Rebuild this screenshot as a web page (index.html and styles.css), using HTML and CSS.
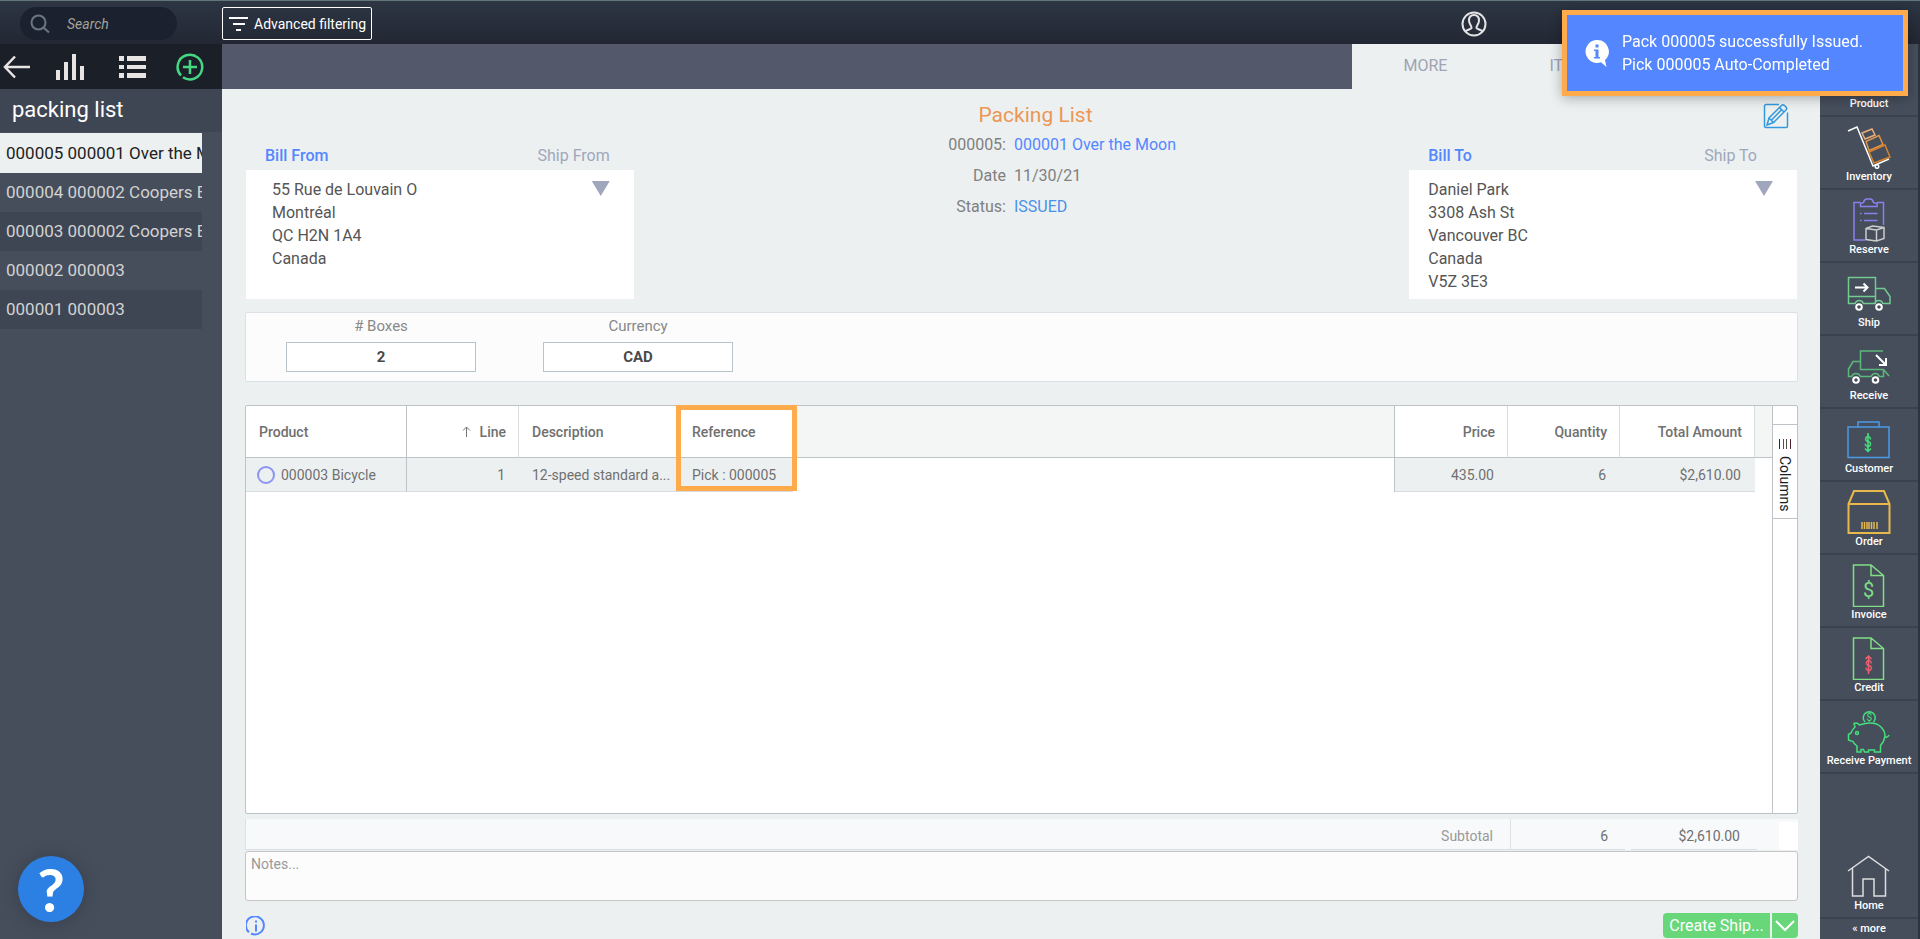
FILE: index.html
```html
<!DOCTYPE html>
<html lang="en">
<head>
    <meta charset="UTF-8">
    <meta name="viewport" content="width=device-width, initial-scale=1.0">
    <title>Packing List</title>
    <link rel="stylesheet" href="styles.css">
</head>
<body>
    <header class="topbar">
        <label class="search">
            <svg width="20" height="20" viewBox="0 0 20 20" fill="none" stroke="#6b7684" stroke-width="2"><circle cx="8.500" cy="8.500" r="7"/><path d="M13.500 13.500L19 18.500"/></svg>
            <input type="text" placeholder="Search" aria-label="Search">
        </label>
        <button class="filter-button">
            <svg width="20" height="16" viewBox="0 0 20 16" fill="none" stroke="#fff" stroke-width="2"><path d="M0 2h19M4 8h12M7 14h5"/></svg>
            Advanced filtering
        </button>
        <button class="user-button" aria-label="Account">
            <svg width="26" height="26" viewBox="0 0 26 26" fill="none" stroke="#e4e4e6" stroke-width="2"><circle cx="13" cy="13" r="11.500"/><path d="M4.500 20.500c2-2 5-2 6-3.500.6-1.500-2.500-4-2.500-7.500C8 6 10 4 13 4s5 2 5 5.500c0 3.500-3.100 6-2.500 7.500 1 1.500 4 1.500 6 3.500"/></svg>
        </button>
    </header>

    <div class="layout">
        <aside class="sidebar">
            <div class="sidebar-tools">
                <button class="back" aria-label="Back">
                    <svg width="28" height="28" viewBox="0 0 28 28" fill="none" stroke="#e8e4e4" stroke-width="2.500"><path d="M27 14H2M12 3.500L2 14l10 10.500"/></svg>
                </button>
                <button class="charts" aria-label="Charts">
                    <svg width="28" height="28" viewBox="0 0 28 28" fill="#e8e4e4"><path d="M0 17h4v10H0zM8 9h4v18H8zM16 1h4v26h-4zM24 13h4v14h-4z"/></svg>
                </button>
                <button class="list" aria-label="List">
                    <svg width="28" height="28" viewBox="0 0 28 28" fill="#e8e4e4"><path d="M0 3h5v5H0zM8 3h19v5H8zM0 12h5v4H0zM8 12h19v4H8zM0 20h5v5H0zM8 20h19v5H8z"/></svg>
                </button>
                <button aria-label="Add">
                    <svg width="28" height="28" viewBox="0 0 28 28" fill="none" stroke="#45d882" stroke-width="2.500"><path d="M14 7v14M7 14h14M5 22.500A12.300 12.300 0 1 1 7 24.200"/></svg>
                </button>
            </div>
            <h1 class="sidebar-title">packing list</h1>
            <ul class="records">
                <li><a class="active" href="#">000005 000001 Over the Moon</a></li>
                <li><a href="#">000004 000002 Coopers Bikes</a></li>
                <li><a href="#">000003 000002 Coopers Bikes</a></li>
                <li><a href="#">000002 000003</a></li>
                <li><a href="#">000001 000003</a></li>
            </ul>
        </aside>

        <main class="main">
            <nav class="tabs">
                <a href="#">MORE</a>
                <a href="#">ITEMS</a>
            </nav>

            <div class="document">
                <div class="document-head">
                    <section class="address">
                        <div class="address-tabs">
                            <a class="active" href="#">Bill From</a>
                            <a href="#">Ship From</a>
                        </div>
                        <div class="address-card">
                            <p>55 Rue de Louvain O<br>Montréal<br>QC H2N 1A4<br>Canada</p>
                            <button class="triangle" aria-label="Choose address"></button>
                        </div>
                    </section>

                    <section class="summary">
                        <h2>Packing List</h2>
                        <dl>
                            <dt>000005:</dt>
                            <dd><a href="#">000001 Over the Moon</a></dd>
                            <dt>Date</dt>
                            <dd>11/30/21</dd>
                            <dt>Status:</dt>
                            <dd class="status">ISSUED</dd>
                        </dl>
                    </section>

                    <section class="address address-to">
                        <button class="edit-button" aria-label="Edit">
                            <svg width="26" height="26" viewBox="0 0 26 26" fill="none" stroke="#3498db" stroke-width="1.500"><path d="M16 1.500H3A1.500 1.500 0 0 0 1.500 3v20A1.500 1.500 0 0 0 3 24.500h20a1.500 1.500 0 0 0 1.500-1.500V9.500"/><path d="M4 22l2-7L18.500 2.500q1.500-1.500 3 0l1.500 1.500q1.500 1.500 0 3L10.500 19.500zM6 15l4.500 4.500M16.500 4.500L21 9M18.500 6.800L8.500 17"/></svg>
                        </button>
                        <div class="address-tabs">
                            <a class="active" href="#">Bill To</a>
                            <a href="#">Ship To</a>
                        </div>
                        <div class="address-card">
                            <p>Daniel Park<br>3308 Ash St<br>Vancouver BC<br>Canada<br>V5Z 3E3</p>
                            <button class="triangle" aria-label="Choose address"></button>
                        </div>
                    </section>
                </div>

                <div class="fields">
                    <div class="field">
                        <label for="boxes"># Boxes</label>
                        <input type="text" id="boxes" value="2">
                    </div>
                    <div class="field">
                        <label for="currency">Currency</label>
                        <input type="text" id="currency" value="CAD">
                    </div>
                </div>

                <div class="grid">
                    <div class="grid-body">
                        <table>
                            <colgroup>
                                <col class="col-product">
                                <col class="col-line">
                                <col class="col-description">
                                <col class="col-reference">
                                <col>
                                <col class="col-price">
                                <col class="col-quantity">
                                <col class="col-total">
                                <col class="col-end">
                            </colgroup>
                            <thead>
                                <tr>
                                    <th class="pinned">Product</th>
                                    <th class="number"><svg width="9" height="11" viewBox="0 0 9 11" fill="none" stroke="#757575"><path d="M4.500 11V1M1 4.500L4.500 1 8 4.500"/></svg>Line</th>
                                    <th>Description</th>
                                    <th class="marked">Reference</th>
                                    <th class="blank pinned"></th>
                                    <th class="number">Price</th>
                                    <th class="number">Quantity</th>
                                    <th class="number">Total Amount</th>
                                    <th class="blank"></th>
                                </tr>
                            </thead>
                            <tbody>
                                <tr>
                                    <td class="pinned product"><label><input type="radio" name="row">000003 Bicycle</label></td>
                                    <td class="number">1</td>
                                    <td>12-speed standard a...</td>
                                    <td>Pick : 000005</td>
                                    <td class="blank pinned"></td>
                                    <td class="number">435.00</td>
                                    <td class="number">6</td>
                                    <td class="number">$2,610.00</td>
                                    <td class="blank"></td>
                                </tr>
                            </tbody>
                        </table>
                    </div>
                    <div class="grid-side">
                        <button class="columns-button">
                            <svg width="12" height="12" viewBox="0 0 12 12" fill="none"><path stroke="#302050" d="M.5 1v10"/><path stroke="#554" d="M4.500 1v10M7.500 1v10"/><path stroke="#502030" d="M11.500 1v10"/></svg>
                            Columns
                        </button>
                    </div>
                </div>

                <div class="totals">
                    <span class="totals-label">Subtotal</span>
                    <span class="totals-quantity">6</span>
                    <span class="totals-amount">$2,610.00</span>
                    <span class="totals-end"></span>
                </div>

                <textarea class="notes" placeholder="Notes..." aria-label="Notes"></textarea>

                <div class="actions">
                    <button class="info-button" aria-label="Information">
                        <svg width="20" height="20" viewBox="0 0 20 20" fill="none" stroke="#5487ff" stroke-width="2"><path d="M3 16.200A9 9 0 1 1 5 17.500"/><path d="M10 4.500v2M10 8.500v7"/></svg>
                    </button>
                    <div class="split-button">
                        <button class="create-button">Create Ship...</button>
                        <button class="more-actions" aria-label="More actions">
                            <svg width="20" height="12" viewBox="0 0 20 12" fill="none" stroke="#fff" stroke-width="2"><path d="M1 1l9 9 9-9"/></svg>
                        </button>
                    </div>
                </div>
            </div>
        </main>

        <nav class="rail">
            <a href="#">Product</a>
            <a href="#">
                <svg viewBox="0 0 44 44"><path stroke="#fff" d="M1 6l9-4 16 39 16-7"/><circle stroke="#fff" cx="30" cy="41.500" r="1.800"/><path stroke="#e8ae7c" d="M15 8l10-4 3 6-10 4z"/><path stroke="#dd9548" d="M19 16.500l13-6 4 9-14 6z"/><path stroke="#d4822b" d="M22 27l16-7 5 12-16 6z"/></svg>
                Inventory
            </a>
            <a href="#">
                <svg viewBox="0 0 44 44"><path stroke="#8c80ec" d="M13.500 4.500H7V42h11M30 4.500h6.500V27M13.500 8.500h16.500v-3l-3.500-1q-1-3.500-3-3.500h-4q-2 0-3 3.500l-3 1zM13 15.500h1.500M17 15.500h13.500M13 22.500h1.500M17 22.500h13.500"/><path stroke="#ccc" d="M19 30.500l6.500-2.500 11.500 1.500v11L29.500 43 19 41.500zl10.500 1.500L37 29.500M29.500 32v11"/></svg>
                Reserve
            </a>
            <a href="#">
                <svg viewBox="0 0 44 44"><path stroke="#72ca8e" d="M8 32.500H1.500V6.500h27v26H16M1.500 25.500h27M28.500 17.500h9l5.500 8v7h-6.500M8 33q1-3.500 4.300-3.500T16.500 33M27.500 33q1-3.500 4.300-3.500T36 33"/><g stroke="#fff" stroke-width="2"><path d="M8 16.500h12.500M16.500 12.500l4 4-4 4"/><circle cx="12" cy="36" r="2.800"/><circle cx="32" cy="36" r="2.800"/></g></svg>
                Ship
            </a>
            <a href="#">
                <svg viewBox="0 0 44 44"><path stroke="#5cb87a" d="M36 7H13.500v18.500h23l5.500 6.500M13.500 17.500H6L1.500 25v7.500h3M13.500 32.500h10M36.500 25.500v7h-4M4.500 33q1-3.500 4.500-3.500t4.500 3.500M24 33q1-3.500 4.300-3.500T32.500 33"/><g stroke="#fff" stroke-width="2"><path d="M29 11l9.500 9.500M39 14v7h-7"/><circle cx="9" cy="36" r="2.800"/><circle cx="28.500" cy="36" r="2.800"/></g></svg>
                Receive
            </a>
            <a href="#">
                <svg viewBox="0 0 44 44"><path stroke="#4b9be6" d="M1 10h41v30.500H1zM11 10V5h21v5"/><path stroke="#45e07c" d="M21 16v19M18 31.500l3 3 3-3"/><text x="21" y="30" fill="#45e07c">$</text></svg>
                Customer
            </a>
            <a href="#">
                <svg viewBox="0 0 44 44"><path stroke="#e8b84a" stroke-width="2" d="M1.500 14L7 1h30l5.500 13v29h-41zh41"/><path stroke="#e8b84a" d="M15 32v7M17.500 32v7M20 32v7M22 32v7M24.500 32v7M27 32v7M30 32v7"/></svg>
                Order
            </a>
            <a href="#">
                <svg viewBox="0 0 44 44"><path stroke="#80de84" d="M6.500 2h17.500L36.500 12.500V43.500h-30zM24 2v10.500h12.500"/><text class="large" x="21.500" y="34" fill="#80de84">$</text></svg>
                Invoice
            </a>
            <a href="#">
                <svg viewBox="0 0 44 44"><path stroke="#80de84" d="M6.500 2h17.500L36.500 12.500V43.500h-30zM24 2v10.500h12.500"/><path stroke="#ee6070" d="M21.500 20v18M18.500 23l3-3 3 3"/><text x="21.500" y="35" fill="#ee6070">$</text></svg>
                Credit
            </a>
            <a href="#">
                <svg viewBox="0 0 44 44"><path stroke="#45e07c" d="M16 15q12-3 18 3 4 4 4 9-1 6-4.500 9.500V43h-6v-2h-6v2h-4l-1-2.500H14V43h-4v-6q-3-2-4-4.500L1.500 31v-5.500L4 24q1.500-4 4-6l-1-3.500q3-1.500 5.500 1.500zM38.500 28q2 1 3.500-2M18 13a6 6 0 1 1 8.500 0"/><circle stroke="#45e07c" cx="10" cy="24" r="1.500"/><text class="small" x="22.300" y="12" fill="#45e07c">$</text></svg>
                Receive Payment
            </a>
            <a class="home" href="#">
                <svg viewBox="0 0 44 44"><path stroke="#ddd" d="M1 17L21.500 2.500 42 17M5.500 14v28H16V25h11v17h11.500V14"/></svg>
                Home
            </a>
            <a class="more" href="#">« more</a>
        </nav>
    </div>

    <div class="toast" role="status">
        <svg width="24" height="27" viewBox="0 0 24 27"><path fill="#fff" d="M12 0a11.500 11.500 0 1 0 4 22.300L21.500 27l-1.500-7A11.500 11.500 0 0 0 12 0z"/><path fill="#5487ff" d="M10.500 4.500h3v3h-3zM9 9.500h4.500V17H15v1.500H9V17h1.500v-6H9z"/></svg>
        <p>Pack 000005 successfully Issued.<br>Pick 000005 Auto-Completed</p>
    </div>

    <button class="help-button" aria-label="Help">?</button>
</body>
</html>
```

FILE: styles.css
```css
*, *::after {
    box-sizing: border-box;
}
body {
    margin: 0;
    height: 100vh;
    display: flex;
    flex-direction: column;
    overflow: hidden;
    font-family: Roboto, "Liberation Sans", sans-serif;
    font-size: 16px;
    color: #555;
    background-color: #ecf0f1;
}
a {
    text-decoration: none;
    color: inherit;
}
button {
    padding: 0;
    border: 0;
    background: none;
    font: inherit;
    color: inherit;
    cursor: pointer;
}
svg {
    display: block;
}
h1, h2, p, ul, dl, dd {
    margin: 0;
    padding: 0;
}

/* top bar */
.topbar {
    flex: none;
    display: flex;
    align-items: center;
    height: 44px;
    padding: 2px 433px 0 20px;
    border-top: 1px solid #627779;
    background: linear-gradient(#2e3644, #222733);
}
.search {
    display: flex;
    align-items: center;
    width: 157px;
    height: 33px;
    padding-left: 10px;
    border-radius: 17px;
    background-color: #1b212e;
}
.search input {
    width: 90px;
    margin-left: 17px;
    padding: 0;
    border: 0;
    outline: 0;
    background: none;
    font: italic 14px Roboto, sans-serif;
    color: #fff;
}
.search input::placeholder {
    color: #a3a39c;
}
.filter-button {
    display: flex;
    align-items: center;
    gap: 5px;
    height: 33px;
    margin-left: 45px;
    padding: 0 5px 0 6px;
    border: 1px solid #fff;
    border-radius: 2px;
    font-size: 14px;
    color: #fff;
}
.user-button {
    margin-left: auto;
}

.layout {
    flex: 1;
    display: flex;
    min-height: 0;
}

/* left sidebar */
.sidebar {
    flex: none;
    width: 222px;
    background-color: #464e5c;
}
.sidebar-tools {
    display: flex;
    align-items: center;
    height: 45px;
    padding: 1px 0 0 3px;
    background-color: #1a1f28;
}
.back {
    margin-right: 25px;
}
.charts {
    margin-right: 35px;
}
.list {
    margin-right: 29px;
}
.sidebar-title {
    height: 44px;
    padding-left: 12px;
    border-bottom: 1px solid #464e5c;
    background-color: #3f4653;
    font-size: 22px;
    font-weight: 400;
    line-height: 42px;
    color: #fff;
}
.records {
    width: 202px;
    list-style: none;
}
.records a {
    display: block;
    height: 39px;
    padding-left: 6px;
    overflow: hidden;
    white-space: nowrap;
    font-size: 17px;
    line-height: 39px;
    color: #d2d2d2;
}
.records li:nth-child(odd) {
    background-color: #3f4653;
}
.records .active {
    height: 40px;
    line-height: 40px;
    background-color: #ecf0f1;
    color: #222;
}

/* document */
.main {
    flex: 1;
    display: flex;
    flex-direction: column;
    min-width: 0;
}
.tabs {
    flex: none;
    display: flex;
    height: 45px;
    padding-right: 174px;
    justify-content: flex-end;
    background: linear-gradient(#ecf0f1, #ecf0f1) right / 468px 100% no-repeat #53586a;
}
.tabs a {
    width: 147px;
    text-align: center;
    line-height: 43px;
    color: #a0a3b1;
}
.document {
    flex: 1;
    display: flex;
    flex-direction: column;
    min-height: 0;
    padding: 0 22px 1px 23px;
}
.document-head {
    display: grid;
    grid-template-columns: 1fr 2fr 1fr;
    align-items: end;
    padding: 0 1px;
}
.address {
    display: flex;
    flex-direction: column;
}
.address-tabs {
    display: flex;
    justify-content: space-between;
    padding: 0 24px 4px 19px;
    line-height: 20px;
    color: #a0a7bc;
}
.address-tabs .active {
    font-weight: 500;
    color: #5487ff;
}
.address-card {
    display: flex;
    justify-content: space-between;
    align-items: flex-start;
    min-height: 129px;
    padding: 8px 24px 0 26px;
    background-color: #fff;
    line-height: 23px;
}
.address-to .address-tabs {
    padding-right: 40px;
}
.address-to .address-card {
    padding-left: 19px;
}
.triangle {
    width: 18px;
    height: 15px;
    margin-top: 3px;
    background-color: #a0a7bc;
    clip-path: polygon(0 0, 100% 0, 50% 100%);
}
.edit-button {
    align-self: flex-end;
    margin: 14px 8px 17px 0;
}
.summary {
    align-self: start;
    padding-top: 12px;
}
.summary h2 {
    padding-left: 28px;
    text-align: center;
    font-size: 21px;
    font-weight: 400;
    line-height: 28px;
    color: #ec9755;
}
.summary dl {
    display: grid;
    grid-template-columns: 48% 1fr;
    column-gap: 8px;
    line-height: 31px;
    color: #808080;
}
.summary dt {
    text-align: right;
}
.summary a {
    color: #5487ff;
}
.summary .status {
    color: #4a90e8;
}

.fields {
    display: flex;
    gap: 67px;
    height: 70px;
    margin-top: 13px;
    padding: 3px 40px 0;
    border: 1px solid #dbe1e5;
    border-radius: 2px;
    background-color: #fcfcfc;
}
.field {
    width: 190px;
    text-align: center;
}
.field label {
    display: block;
    font-size: 15px;
    line-height: 20px;
    color: #888;
}
.field input {
    width: 100%;
    height: 30px;
    margin-top: 6px;
    border: 1px solid #b9c4ca;
    background-color: #fff;
    text-align: center;
    font: 700 15px Roboto, sans-serif;
    color: #4a4a4a;
}

/* item grid */
.grid {
    flex: 1;
    display: flex;
    min-height: 0;
    margin-top: 23px;
    border: 1px solid #bdc3c7;
    border-radius: 2px;
    background-color: #fff;
}
.grid-body {
    flex: 1;
}
.grid table {
    width: 100%;
    table-layout: fixed;
    border-collapse: separate;
    border-spacing: 0;
    font-size: 14px;
    color: #707070;
}
.col-product {
    width: 161px;
}
.col-line {
    width: 112px;
}
.col-description {
    width: 160px;
}
.col-reference {
    width: 114px;
}
.col-price {
    width: 113px;
}
.col-quantity {
    width: 112px;
}
.col-total {
    width: 135px;
}
.col-end {
    width: 17px;
}
.grid th {
    position: relative;
    height: 52px;
    padding: 0 12px 0 13px;
    border-right: 1px solid #d9dcde;
    border-bottom: 1px solid #bdc3c7;
    text-align: left;
    font-weight: 500;
}
.grid td {
    height: 34px;
    padding: 0 14px 0 13px;
    border-bottom: 1px solid #d9dcde;
    background-color: #ecf0f1;
    white-space: nowrap;
}
.grid .pinned {
    border-right: 1px solid #bdc3c7;
}
.grid .number {
    text-align: right;
}
.grid th svg {
    display: inline-block;
    margin-right: 9px;
}
.grid th.blank {
    background-color: #f4f6f6;
}
.grid th.blank:last-child {
    border-right: 0;
}
.grid td.blank {
    border-bottom: 0;
    background-color: #fff;
}
/* outline round the reference column */
.marked::after {
    content: "";
    position: absolute;
    z-index: 1;
    top: -1px;
    left: -3px;
    width: 121px;
    height: 86px;
    border: 5px solid #ffab4b;
}
.grid td.product {
    padding-left: 11px;
}
.product label {
    display: flex;
    align-items: center;
    gap: 6px;
}
.product input {
    appearance: none;
    width: 18px;
    height: 18px;
    margin: 0;
    border: 2px solid #8c93f0;
    border-radius: 50%;
}
.grid-side {
    width: 25px;
    padding-top: 18px;
    border-left: 1px solid #bdc3c7;
}
.columns-button {
    display: flex;
    align-items: center;
    gap: 6px;
    width: 24px;
    height: 95px;
    padding-top: 13px;
    border-top: 1px solid #bdc3c7;
    border-bottom: 1px solid #bdc3c7;
    writing-mode: vertical-rl;
    font-size: 14px;
    color: #181d1f;
}

.totals {
    display: flex;
    height: 31px;
    margin-top: 5px;
    background-color: #f7f9fb;
    font-size: 14px;
    line-height: 34px;
    text-align: right;
    color: #707070;
}
.totals span {
    border-bottom: 1px solid #d9dfe5;
}
.totals .totals-label {
    flex: 1;
    padding-right: 17px;
    border-left: 1px solid #dbe1e5;
    border-right: 1px solid #dbe1e5;
    color: #999;
}
.totals-quantity {
    width: 114px;
    padding-right: 17px;
}
.totals-amount {
    width: 126px;
    margin-left: 6px;
    padding-right: 17px;
}
.totals .totals-end {
    width: 19px;
    margin: 3px 0 0 22px;
    border: 0;
    background-color: #fff;
}
.notes {
    display: block;
    height: 50px;
    margin-top: 1px;
    padding: 3px 5px;
    border: 1px solid #c6c6c6;
    border-radius: 3px;
    background-color: #fcfcfc;
    resize: none;
    font: 14px/18px Roboto, sans-serif;
}
.notes::placeholder {
    color: #999;
}
.actions {
    display: flex;
    justify-content: space-between;
    align-items: center;
    margin-top: 12px;
    padding-left: 1px;
}
.split-button {
    display: flex;
    gap: 2px;
    height: 25px;
    border-radius: 4px;
    overflow: hidden;
    color: #fff;
}
.create-button {
    width: 107px;
    background-color: #68d77a;
}
.more-actions {
    display: flex;
    align-items: center;
    justify-content: center;
    width: 26px;
    background-color: #68d77a;
}

/* right rail */
.rail {
    flex: none;
    display: flex;
    flex-direction: column;
    width: 100px;
    border-right: 2px solid #2c3440;
    background-color: #464e5c;
    font-size: 11px;
    font-weight: 500;
    line-height: 14px;
    color: #fff;
}
.rail a {
    display: flex;
    flex-direction: column;
    align-items: center;
    justify-content: flex-end;
    gap: 1px;
    height: 73px;
    padding-bottom: 4px;
    border-bottom: 2px solid #3a424d;
}
.rail svg {
    width: 44px;
    height: 44px;
    fill: none;
    stroke-width: 1.5;
}
.rail text {
    font-size: 14px;
    font-weight: 400;
    text-anchor: middle;
}
.rail text.large {
    font-size: 20px;
}
.rail text.small {
    font-size: 10px;
}
.rail .home {
    margin-top: auto;
}
.rail .more {
    height: 20px;
    padding-bottom: 3px;
    border: 0;
}

/* floating pieces */
.toast {
    position: fixed;
    top: 10px;
    right: 12px;
    display: flex;
    align-items: center;
    gap: 13px;
    width: 346px;
    height: 86px;
    padding-left: 18px;
    border: 5px solid #ffab4b;
    background-color: #5487ff;
    box-shadow: 0 2px 12px rgba(0, 0, 0, 0.3);
    line-height: 23px;
    color: #fff;
}
.help-button {
    position: fixed;
    left: 18px;
    bottom: 17px;
    width: 66px;
    height: 66px;
    border-radius: 50%;
    background-color: #2c80e4;
    box-shadow: 0 1px 20px rgba(0, 0, 0, 0.2);
    font: 700 60px/66px Lato, sans-serif;
    color: #fff;
}
```
